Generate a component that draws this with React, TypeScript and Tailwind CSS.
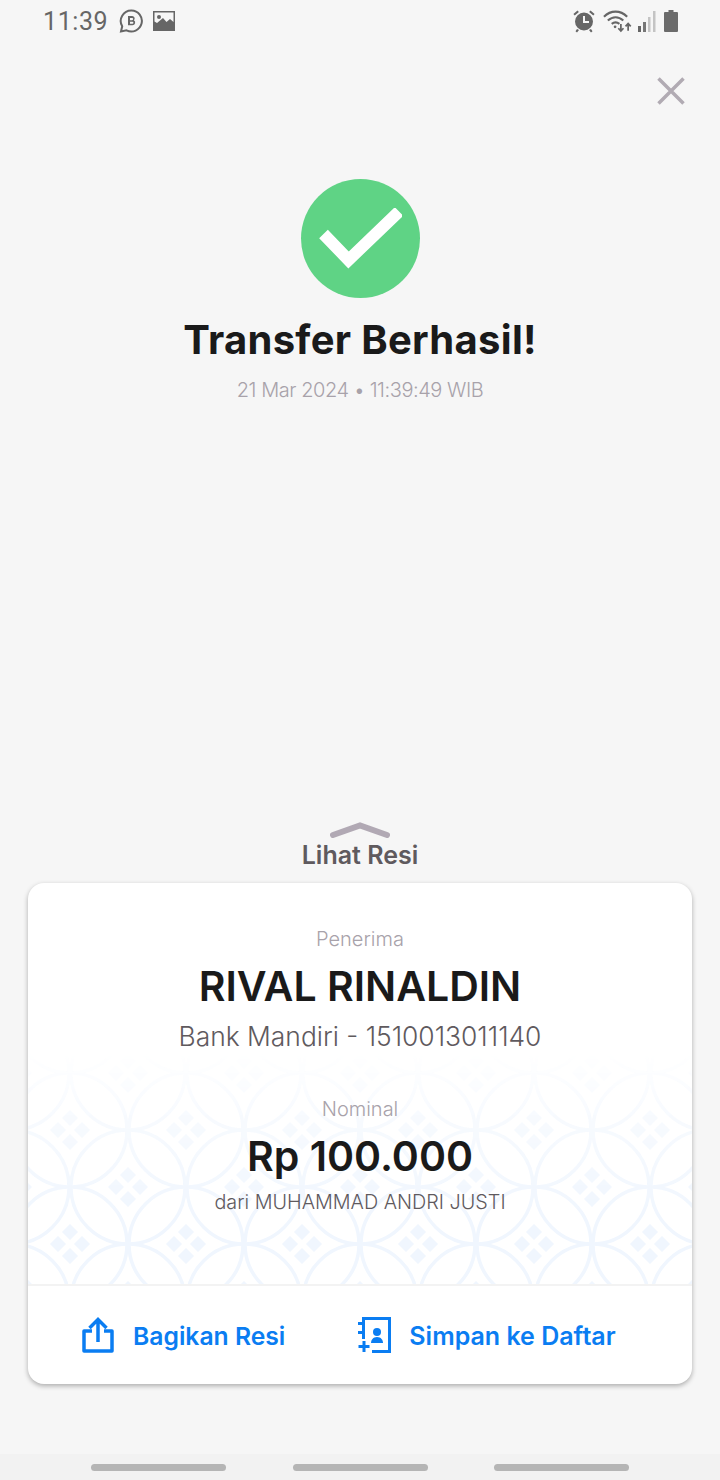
function BatikPattern() {
  return (
    <svg className="absolute inset-0 h-full w-full [mask-image:linear-gradient(to_bottom,transparent_42%,rgba(0,0,0,0.5)_58%,black_84%)]">
      <defs>
        <g id="diamonds" fill="#f0f6fe">
          <path d="M0 -20l8 8-8 8-8-8z" />
          <path d="M0 4l8 8-8 8-8-8z" />
          <path d="M-12 -8l8 8-8 8-8-8z" />
          <path d="M12 -8l8 8-8 8-8-8z" />
        </g>
        <pattern id="batik" x="42" y="19" width="116" height="114" patternUnits="userSpaceOnUse">
          <g fill="none" stroke="#f0f6fe" strokeWidth="3.500">
            <circle cx="0" cy="0" r="57" />
            <circle cx="116" cy="0" r="57" />
            <circle cx="0" cy="114" r="57" />
            <circle cx="116" cy="114" r="57" />
            <circle cx="58" cy="57" r="57" />
          </g>
          <use href="#diamonds" x="0" y="0" />
          <use href="#diamonds" x="116" y="0" />
          <use href="#diamonds" x="0" y="114" />
          <use href="#diamonds" x="116" y="114" />
          <use href="#diamonds" x="58" y="57" />
        </pattern>
      </defs>
      <rect width="100%" height="100%" fill="url(#batik)" />
    </svg>
  );
}

function StatusBar() {
  return (
    <div className="flex h-[42px] items-center justify-between pl-[43px] pr-[42px] text-[#666666]">
      <div className="flex items-center">
        <span className="font-['Roboto',sans-serif] text-[25px] leading-none tracking-[0.6px]">11:39</span>
        <svg className="ml-[11px]" width="24" height="24" viewBox="0 0 24 24">
          <path d="M12.500 1.500a10.500 10.500 0 1 1-5 19.800L2 22.500l1.200-5.200a10.500 10.500 0 0 1 9.300-15.800z" fill="none" stroke="currentColor" strokeWidth="2" />
          <path d="M9 7h4.200a2.500 2.500 0 0 1 1.700 4.300 2.700 2.700 0 0 1-1.400 5H9zm2 2v2.200h2.100a1.100 1.100 0 0 0 0-2.200zm0 3.800v2h2.400a1 1 0 0 0 0-2z" fill="currentColor" fillRule="evenodd" />
        </svg>
        <svg className="ml-[10px]" width="22" height="20" viewBox="0 0 22 20">
          <path d="M0 0h22v20H0z" fill="#666666" />
          <path d="M1.500 1.500h19v9.500l-3.500-3-3.500 3-3.500-4-6 5-2.500-1.500z" fill="#f6f6f6" />
          <circle cx="6" cy="6" r="2" fill="#666666" />
        </svg>
      </div>
      <div className="flex items-center">
        <svg width="24" height="24" viewBox="0 0 24 24" fill="currentColor">
          <path fillRule="evenodd" d="M12 3.500a9 9 0 1 1 0 18 9 9 0 0 1 0-18zM11 7v7h6v-2h-4V7z" />
          <path d="M5.500 1.500l1.400 1.500-4.200 3.600L1.400 5zM18.500 1.500L17.100 3l4.200 3.600L22.600 5z" />
          <path d="M5 20l2 1-2 2.500-1.500-1.200zM19 20l-2 1 2 2.500 1.500-1.200z" />
        </svg>
        <svg className="ml-[7px]" width="29" height="24" viewBox="0 0 30 24" fill="none" stroke="currentColor" strokeWidth="2.200">
          <path d="M1 7.500C8 .5 18 .5 25 7.500" />
          <path d="M5 11.500c5-4.500 11-4.500 16 0" />
          <path d="M9 15c2.500-2 5.500-2 8 0" />
          <circle cx="12.500" cy="18" r="1.400" fill="currentColor" stroke="none" />
          <path d="M18.500 15v7M15.800 19.500l2.700 2.800 2.700-2.800" strokeWidth="1.800" />
          <path d="M26 22v-7M23.300 17.500l2.700-2.800 2.700 2.800" strokeWidth="1.800" />
        </svg>
        <svg className="ml-[5px]" width="20" height="22" viewBox="0 0 20 22">
          <path d="M1 16h3v6H1z" fill="#666666" />
          <path d="M6 12h3v10H6z" fill="#777777" />
          <path d="M11 7h2.500v15H11z" fill="#c4c4c4" />
          <path d="M16 1h2.500v21H16z" fill="#c4c4c4" />
        </svg>
        <svg className="ml-[7px]" width="14" height="22" viewBox="0 0 14 22">
          <path d="M4.500 0h5v2H13a1 1 0 0 1 1 1v18a1 1 0 0 1-1 1H1a1 1 0 0 1-1-1V3a1 1 0 0 1 1-1h3.500z" fill="#6b6b6b" />
        </svg>
      </div>
    </div>
  );
}

export default function App() {
  return (
    <div className="flex h-[1480px] w-[720px] flex-col overflow-hidden bg-[#f6f6f6] font-['Inter',sans-serif]">
      <StatusBar />

      <div className="flex justify-end pr-[34px] pt-[34px]">
        <svg width="30" height="30" viewBox="0 0 30 30" fill="none" stroke="#b1abb3" strokeWidth="3.500">
          <path d="M2.500 2.500l25 25M27.500 2.500l-25 25" />
        </svg>
      </div>

      <div className="mt-[73px] flex flex-col items-center">
        <div className="flex h-[119px] w-[119px] items-center justify-center rounded-full bg-[#5fd385]">
          <svg width="84" height="62" viewBox="0 0 84 62" fill="none" stroke="#ffffff" strokeWidth="12">
            <path d="M5.500 26l25 26L81 3.500" />
          </svg>
        </div>
        <h1 className="mt-[18px] text-[40px] font-bold leading-[48px] tracking-[0.3px] text-[#1a1a1a]">Transfer Berhasil!</h1>
        <p className="mt-[14px] text-[20px] font-light leading-[24px] tracking-[-0.45px] text-[#a8a2aa]">21 Mar 2024 • 11:39:49 WIB</p>
      </div>

      <div className="flex-1" />

      <div className="flex flex-col items-center">
        <svg width="60" height="16" viewBox="0 0 60 16" fill="none" stroke="#b1a9b4" strokeWidth="6" strokeLinecap="round">
          <path d="M3 13L30 3.500 57 13" />
        </svg>
        <span className="mt-[2px] text-[25px] font-semibold leading-[30px] text-[#5f5a5e]">Lihat Resi</span>
      </div>

      <div className="mx-[28px] mt-[13px] flex h-[501px] flex-col overflow-hidden rounded-[16px] bg-white shadow-[0_2px_5px_rgba(0,0,0,0.3)]">
        <div className="relative flex h-[403px] flex-col items-center border-b-2 border-[#f3f3f3] pt-[44px]">
          <BatikPattern />
          <div className="relative flex flex-col items-center">
            <span className="text-[20px] font-light leading-[24px] text-[#a8a2aa]">Penerima</span>
            <span className="mt-[11px] text-[41px] font-semibold leading-[48px] text-[#1a1a1a]">RIVAL RINALDIN</span>
            <span className="mt-[8px] text-[26.400px] font-light leading-[36px] text-[#5f5a5e]">Bank Mandiri - 1510013011140</span>
            <span className="mt-[43px] text-[20px] font-light leading-[24px] text-[#a8a2aa]">Nominal</span>
            <span className="mt-[11px] text-[41px] font-semibold leading-[48px] text-[#1a1a1a]">Rp 100.000</span>
            <span className="mt-[10px] text-[19.800px] font-light leading-[24px] text-[#5f5a5e]">dari MUHAMMAD ANDRI JUSTI</span>
          </div>
        </div>
        <div className="flex flex-1 items-center pl-[54px] text-[24.700px] font-semibold text-[#0a7df2]">
          <svg width="32" height="36" viewBox="0 0 32 36" fill="none" stroke="currentColor" strokeWidth="3.500">
            <path d="M10 14H2v20h28V14h-8" strokeLinejoin="round" />
            <path d="M16 25V3M7.500 11L16 2.500 24.500 11" />
          </svg>
          <span className="ml-[19px] pt-[3px]">Bagikan Resi</span>
          <svg className="ml-[72px]" width="34" height="36" viewBox="0 0 34 36" fill="currentColor">
            <path d="M5 0h29v36H15v-3h16V3H8v19H5z" />
            <path d="M1 5h7v3H1zM1 14h7v3H1z" />
            <path d="M5.500 24h3v4h4v3h-4v4h-3v-4h-4v-3h4z" />
            <circle cx="20" cy="15" r="4" />
            <path d="M14 26c0-3 2-6 6-6s6 3 6 6z" />
          </svg>
          <span className="ml-[18px] pt-[3px] text-[25px]">Simpan ke Daftar</span>
        </div>
      </div>

      <div className="mt-[70px] flex h-[26px] items-center justify-between bg-[#f2f2f2] px-[91px]">
        <div className="h-[7px] w-[135px] rounded-full bg-[#b5b5b5]" />
        <div className="h-[7px] w-[135px] rounded-full bg-[#b5b5b5]" />
        <div className="h-[7px] w-[135px] rounded-full bg-[#b5b5b5]" />
      </div>
    </div>
  );
}
